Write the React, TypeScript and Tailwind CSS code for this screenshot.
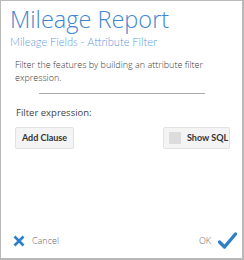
// Mileage Report — attribute filter dialog

export default function App() {
  return (
    <div
      className="w-[244px] h-[260px] bg-white border-l border-t border-r-2 border-b-2 border-[#b9b9b9] flex flex-col text-[#444]"
      style={{ fontFamily: '"Open Sans", "Noto Sans", sans-serif' }}
    >
      <div className="pl-[9px] pt-[2px]">
        <h1 className="text-[23.5px] leading-[32px] font-light text-[#3f86d0]">
          Mileage Report
        </h1>
        <h2
          className="text-[11px] leading-[14px] font-light text-[#5e9ad8]"
          style={{ fontFamily: 'Lato, "Open Sans", sans-serif' }}
        >
          Mileage Fields - Attribute Filter
        </h2>
      </div>

      <p className="pl-[14px] pr-[20px] mt-[9px] text-[9px] leading-[13px] font-light text-[#3a3a3a]">
        Filter the features by building an attribute filter expression.
      </p>

      <div className="mx-auto mt-[9px] w-[166px] h-px bg-[#aaa]" />

      <p className="px-[15px] mt-[12px] text-[9.5px] leading-[13px] text-[#444]">
        Filter expression:
      </p>

      <div
        className="flex justify-between items-center pl-[14px] pr-[12px] mt-[8px]"
        style={{ fontFamily: 'Lato, "Open Sans", sans-serif' }}
      >
        <button className="h-[22px] w-[59px] bg-[#f4f4f4] border border-[#e2e2e2] rounded-[2px] text-[9px] font-bold text-[#333]">
          Add Clause
        </button>
        <button className="h-[22px] w-[67px] pl-[5px] bg-[#f4f4f4] border border-[#e2e2e2] rounded-[2px] text-[9px] font-bold text-[#333] flex items-center gap-[6px]">
          <span className="w-[12px] h-[12px] bg-[#dcdcdc] rounded-[1px]" />
          Show SQL
        </button>
      </div>

      <div className="mt-auto flex items-center justify-between pl-[12px] pr-[5px] pb-[8px]">
        <button className="flex items-center gap-[7px] text-[9px] font-light text-[#666]">
          <svg width="12" height="12" viewBox="0 0 12 12">
            <path d="M1.5 1.5 L10.5 10.5 M10.5 1.5 L1.5 10.5" stroke="#2f7fc8" strokeWidth="2.6" strokeLinecap="butt" />
          </svg>
          Cancel
        </button>
        <button className="flex items-center gap-[7px] text-[9px] font-light text-[#666]">
          OK
          <svg width="19" height="18" viewBox="0 0 19 18">
            <path d="M1.5 10 L6.5 15 L17.5 2" fill="none" stroke="#2f7fc8" strokeWidth="3.4" strokeLinecap="round" strokeLinejoin="round" />
          </svg>
        </button>
      </div>
    </div>
  );
}
